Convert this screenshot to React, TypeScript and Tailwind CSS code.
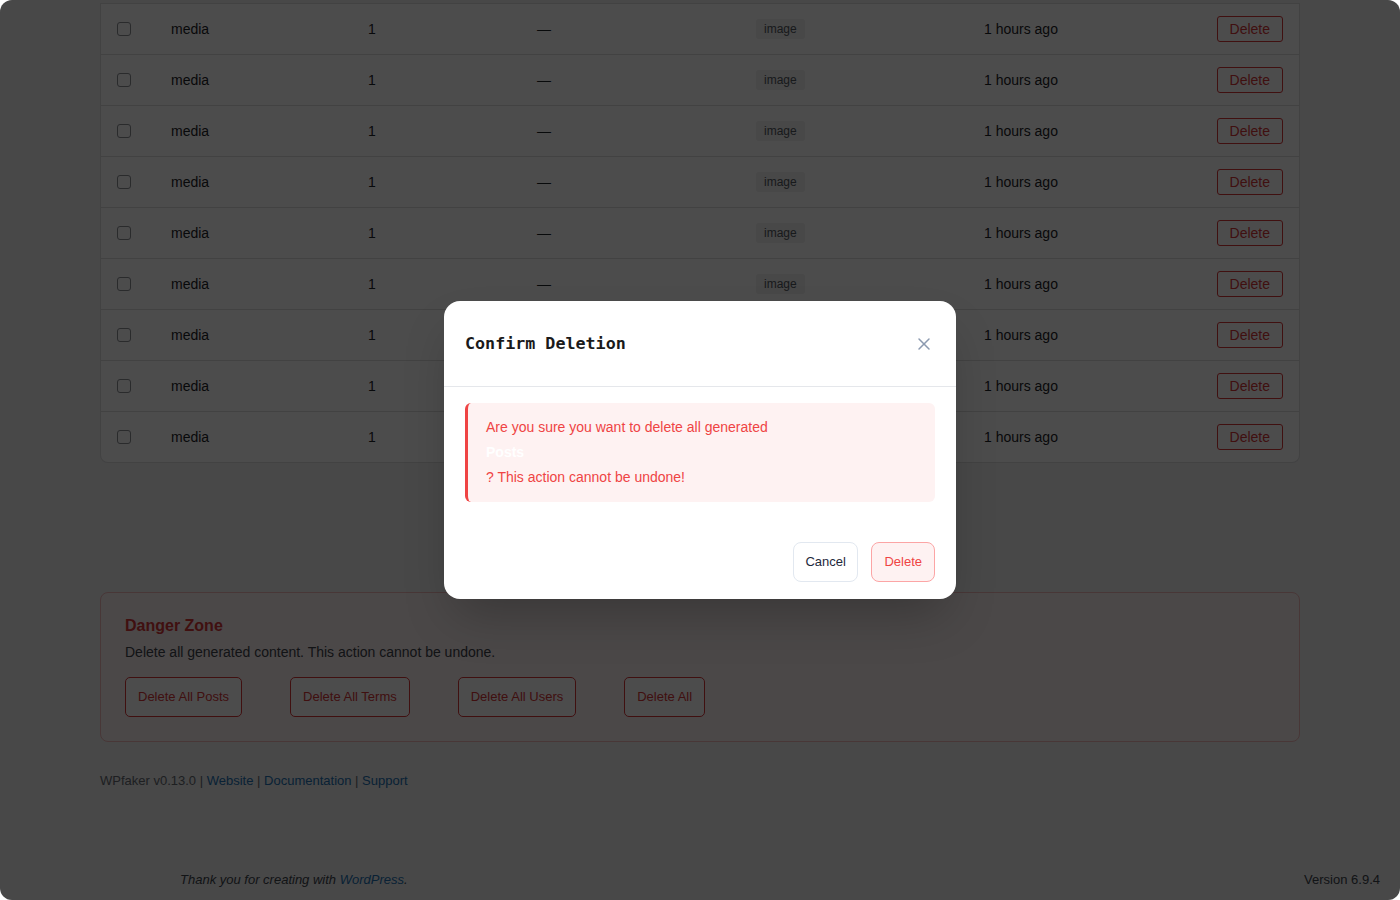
import React from "react";

const rows = Array.from({ length: 9 });
const red = "text-[#d63638]";

export default function App() {
  return (
    <div className="w-[1400px] h-[900px] bg-white overflow-hidden" style={{ fontFamily: '"Liberation Sans", Arial, sans-serif' }}>
      <div className="relative w-full h-full rounded-[12px] overflow-hidden bg-[#f0f0f1]">
        {/* page */}
        <div className="flex flex-col h-full">
          <div className="pt-[3px] px-[100px]">
            <div className="bg-white border-x border-b border-[#dcdcde] rounded-b-[8px]">
              {rows.map((_, i) => (
                <div
                  key={i}
                  className="grid grid-cols-[54px_197px_169px_219px_228px_1fr_auto] items-center h-[51px] border-t border-[#dcdcde] pl-[16px] pr-[16px] text-[14px] text-[#1d2327]"
                >
                  <div className="flex items-center">
                    <div className="w-[14px] h-[14px] rounded-[3px] border border-[#8c8f94] bg-white" />
                  </div>
                  <div>media</div>
                  <div>1</div>
                  <div>—</div>
                  <div className="flex items-center">
                    <span className="flex items-center h-[20px] px-[8px] rounded-[3px] bg-[#f0f0f1] text-[12px] leading-[14px] text-[#50575e] -mt-[1px]">image</span>
                  </div>
                  <div>1 hours ago</div>
                  <div>
                    <button className={`h-[26px] px-[12px] rounded-[3px] border border-[#d63638] ${red} text-[14px] bg-white`}>Delete</button>
                  </div>
                </div>
              ))}
            </div>
          </div>

          <div className="px-[100px] mt-[129px]">
            <div className="border border-[#f0b8b9] bg-[#fcf0f1] rounded-[8px] pl-[24px] pr-[24px] pt-[23px] pb-[24px]">
              <div className={`text-[16px] font-bold ${red} leading-[20px]`}>Danger Zone</div>
              <div className="mt-[6px] text-[14px] text-[#3c434a] leading-[20px]">Delete all generated content. This action cannot be undone.</div>
              <div className="mt-[15px] flex gap-[48px]">
                {["Delete All Posts", "Delete All Terms", "Delete All Users", "Delete All"].map((t) => (
                  <button key={t} className={`h-[40px] px-[12px] rounded-[5px] border border-[#d63638] ${red} text-[13px] bg-white`}>{t}</button>
                ))}
              </div>
            </div>
          </div>

          <div className="px-[100px] mt-[31px] text-[13px] text-[#646970] leading-[16px]">
            WPfaker v0.13.0 | <span className="text-[#2271b1]">Website</span> | <span className="text-[#2271b1]">Documentation</span> | <span className="text-[#2271b1]">Support</span>
          </div>

          <div className="mt-auto mb-[12px] pl-[180px] pr-[20px] flex justify-between text-[13px] text-[#3c434a] leading-[16px]">
            <span className="italic">Thank you for creating with <span className="text-[#2271b1]">WordPress</span>.</span>
            <span>Version 6.9.4</span>
          </div>
        </div>

        {/* overlay */}
        <div className="absolute inset-0 bg-black/70 flex items-center justify-center">
          <div className="w-[512px] bg-white rounded-[16px] shadow-2xl">
            <div className="h-[86px] flex items-center justify-between pl-[21px] pr-[22px] border-b border-[#e5e7eb]">
              <div className="text-[16.7px] font-bold text-[#1a1a1a] mt-[1px]" style={{ fontFamily: '"DejaVu Sans Mono", "Liberation Mono", monospace' }}>
                Confirm Deletion
              </div>
              <svg width="20" height="20" viewBox="0 0 24 24" fill="none" stroke="#8c9ab0" strokeWidth="1.8" strokeLinecap="round">
                <path d="M18 6 6 18" />
                <path d="m6 6 12 12" />
              </svg>
            </div>
            <div className="pt-[16px] pb-[20px] px-[21px]">
              <div className="bg-[#fef2f2] border-l-[3px] border-[#ef4444] rounded-[6px] pl-[18px] pr-[16px] py-[12px] text-[14px] leading-[25px] text-[#ef4444]">
                <div>Are you sure you want to delete all generated</div>
                <div className="font-bold text-white">Posts</div>
                <div>? This action cannot be undone!</div>
              </div>
            </div>
            <div className="pt-[20px] pb-[17px] px-[21px] flex justify-end gap-[13px]">
              <button className="h-[40px] px-[11.5px] rounded-[8px] border border-[#e2e8f0] bg-white text-[13px] text-[#1e293b]">Cancel</button>
              <button className="h-[40px] px-[12px] rounded-[8px] border border-[#fca5a5] bg-[#fef2f2] text-[13px] text-[#ef4444]">Delete</button>
            </div>
          </div>
        </div>
      </div>
    </div>
  );
}
